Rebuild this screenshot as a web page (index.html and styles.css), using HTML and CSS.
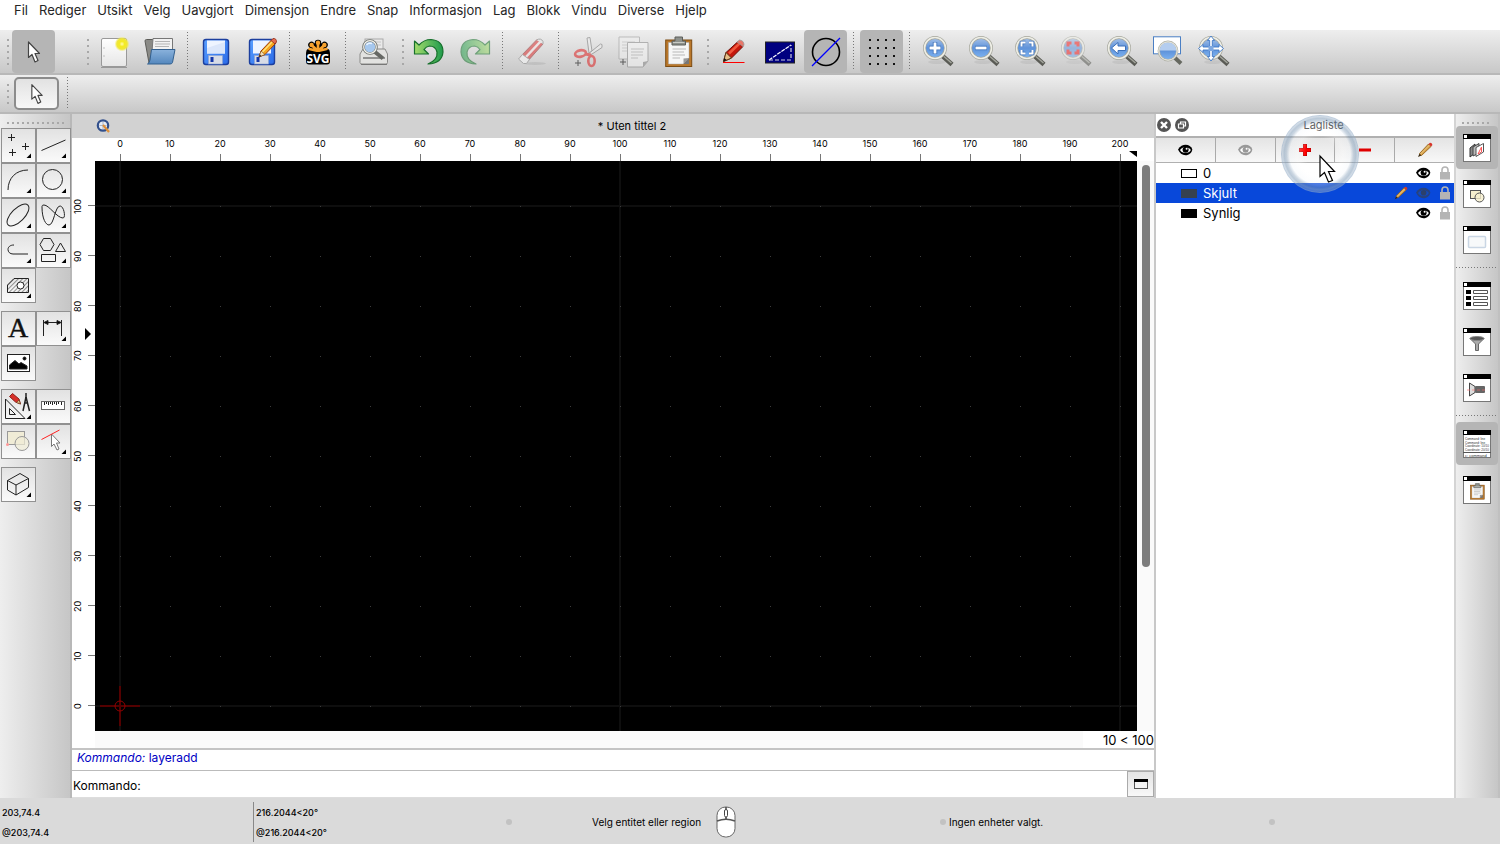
FILE: index.html
```html
<!DOCTYPE html>
<html lang="no">
<head>
    <meta charset="UTF-8">
    <meta name="viewport" content="width=device-width, initial-scale=1.0">
    <title>Uten tittel 2</title>
    <link rel="stylesheet" href="styles.css">
</head>
<body>
    <!-- Shared icon parts -->
    <svg class="defs" width="0" height="0" aria-hidden="true">
        <defs>
            <linearGradient id="blueGlass" x1="0" y1="0" x2="0" y2="1">
                <stop offset="0" stop-color="#a9c3e8"/>
                <stop offset="0.5" stop-color="#5f93da"/>
                <stop offset="1" stop-color="#7db4f2"/>
            </linearGradient>
            <linearGradient id="floppy" x1="0" y1="0" x2="1" y2="1">
                <stop offset="0" stop-color="#5aa0ff"/>
                <stop offset="1" stop-color="#2a6ae8"/>
            </linearGradient>
            <linearGradient id="paper" x1="0" y1="0" x2="0" y2="1">
                <stop offset="0" stop-color="#ffffff"/>
                <stop offset="1" stop-color="#e6e6e6"/>
            </linearGradient>
            <linearGradient id="folder" x1="0" y1="0" x2="0" y2="1">
                <stop offset="0" stop-color="#8ab2dc"/>
                <stop offset="1" stop-color="#5487bd"/>
            </linearGradient>
            <linearGradient id="greenArrow" x1="0" y1="0" x2="1" y2="0">
                <stop offset="0" stop-color="#a4dc6c"/>
                <stop offset="1" stop-color="#1f9a4c"/>
            </linearGradient>
            <radialGradient id="spark">
                <stop offset="0" stop-color="#fffbb0"/>
                <stop offset="0.35" stop-color="#f4ea20"/>
                <stop offset="0.7" stop-color="#efe63a"/>
                <stop offset="1" stop-color="#f4ee60" stop-opacity="0"/>
            </radialGradient>
            <pattern id="hatch" width="3" height="3" patternUnits="userSpaceOnUse" patternTransform="rotate(45)">
                <path d="M0 0V3" stroke="#333" stroke-width="1"/>
            </pattern>
            <pattern id="gridDots" width="50" height="50" patternUnits="userSpaceOnUse">
                <rect x="25" y="45" width="1" height="1" fill="#3c3c3c"/>
            </pattern>
            <pattern id="gridLines" width="500" height="500" patternUnits="userSpaceOnUse">
                <rect x="24" y="0" width="2" height="500" fill="#0e0e0e"/>
                <rect x="0" y="44" width="500" height="2" fill="#0e0e0e"/>
            </pattern>
        </defs>
        <symbol id="arrow" viewBox="0 0 32 32">
            <path d="M10.500 6V21.500L14 18.500L17 26L20 24.500L17 17.500H21.500Z" fill="#fff" stroke="#444" stroke-width="1.200" stroke-linejoin="round"/>
        </symbol>
        <symbol id="lens" viewBox="0 0 32 32">
            <ellipse cx="15" cy="26" rx="9" ry="2" fill="#000" opacity="0.060"/>
            <path d="M20.500 20L30 28.500" stroke="#5a5b55" stroke-width="4.500"/>
            <path d="M22 20.500L29.500 27" stroke="#a3a59c" stroke-width="1.500"/>
            <circle cx="13" cy="12" r="10.500" fill="url(#blueGlass)" stroke="#a5a69c" stroke-width="3"/>
            <circle cx="13" cy="12" r="10.500" fill="none" stroke="#eeeee6" stroke-width="1.600"/>
        </symbol>
        <symbol id="eye" viewBox="0 0 16 12">
            <path d="M1 5.500C3 2 6 0.800 8.500 0.800C12 0.800 14 2.500 15.300 5.200C15 8.800 12 11.200 8.500 11.200C5 11.200 2.500 9 1 5.500Z" fill="currentColor"/>
            <path d="M3 6C5 3.700 6.500 3.300 8.500 3.300C11 3.300 12.500 4.300 13.800 6C12.500 8.300 11 9 8.500 9C6 9 4.500 8.200 3 6Z" fill="#fff"/>
            <circle cx="8.600" cy="5.800" r="3" fill="currentColor"/>
            <circle cx="9.600" cy="4.800" r="1" fill="#fff"/>
        </symbol>
        <symbol id="hiddenEye" viewBox="0 0 16 12">
            <path d="M1 5.500C3 2 6 0.800 8.500 0.800C12 0.800 14 2.500 15.300 5.200C15 8.800 12 11.200 8.500 11.200C5 11.200 2.500 9 1 5.500Z" fill="#28427c"/>
            <path d="M3 6C5 3.700 6.500 3.300 8.500 3.300C11 3.300 12.500 4.300 13.800 6C12.500 8.300 11 9 8.500 9C6 9 4.500 8.200 3 6Z" fill="#124bc0"/>
            <circle cx="8.600" cy="5.800" r="2.800" fill="#2b406c"/>
        </symbol>
        <symbol id="lock" viewBox="0 0 12 16">
            <path d="M3 8V5C3 1 9 1 9 5V8" fill="none" stroke="#b4b4b4" stroke-width="1.600"/>
            <rect x="1" y="7" width="10" height="7.500" fill="#b4b4b4"/>
        </symbol>
        <symbol id="pencil" viewBox="0 0 16 16">
            <path d="M1 15L2.500 11.500L4.500 13.500Z" fill="#3a2a10"/>
            <path d="M2.500 11.500L11.500 2L14 4.500L4.500 13.500Z" fill="#d9a24a" stroke="#8c5a14" stroke-width="0.800"/>
            <path d="M3.500 12L12.500 3" stroke="#f0d494" stroke-width="0.800"/>
            <path d="M11.500 2L13 0.800Q15.500 1 15.300 3.300L14 4.500Z" fill="#d8342a"/>
        </symbol>
        <symbol id="clipboard" viewBox="0 0 32 32">
            <rect x="2.700" y="4" width="26" height="26.500" fill="#b9772a" stroke="#7d4c12"/>
            <path d="M5.500 6.500H26V22L20.500 28H5.500Z" fill="#f6f6f6" stroke="#aaa" stroke-width="0.500"/>
            <path d="M26 22L20.500 28V22.500Z" fill="#999"/>
            <path d="M20.500 28H26V22Z" fill="#777"/>
            <path d="M9.500 13H23M9.500 16H21M9.500 19H22M9.500 22H17" stroke="#b8b8b8" stroke-width="1.200"/>
            <path d="M9 9V5H12V1H19.500V5H22.500V9Z" fill="#8e918c" stroke="#5c5e5a"/>
            <path d="M10 6.500H21.500" stroke="#c8cac5"/>
        </symbol>
        <symbol id="window" viewBox="0 0 28 28">
            <rect x="0.500" y="0.500" width="27" height="27" fill="#fff" stroke="#777"/>
            <rect x="0" y="0" width="28" height="5" fill="#000"/>
            <rect x="1" y="1" width="3" height="3" fill="#fff"/>
        </symbol>
        <symbol id="more" viewBox="0 0 33 33">
            <path d="M29 24.500V29H24.500Z" fill="#000"/>
        </symbol>
    </svg>

    <nav class="menubar" aria-label="Hovedmeny">
        <button type="button">Fil</button>
        <button type="button">Rediger</button>
        <button type="button">Utsikt</button>
        <button type="button">Velg</button>
        <button type="button">Uavgjort</button>
        <button type="button">Dimensjon</button>
        <button type="button">Endre</button>
        <button type="button">Snap</button>
        <button type="button">Informasjon</button>
        <button type="button">Lag</button>
        <button type="button">Blokk</button>
        <button type="button">Vindu</button>
        <button type="button">Diverse</button>
        <button type="button">Hjelp</button>
    </nav>

    <!-- Main toolbar -->
    <div class="toolbar">
        <span class="grip"></span>
        <button type="button" class="tool active" aria-label="Velg"><svg><use href="#arrow"/></svg></button>

        <span class="grip grip-file"></span>
        <button type="button" class="tool" aria-label="Ny">
            <svg viewBox="0 0 32 32">
                <rect x="3.500" y="2.500" width="25" height="28" rx="1.500" fill="url(#paper)" stroke="#999"/>
                <path d="M3 31.500H29" stroke="#777" stroke-width="1" opacity="0.600"/>
                <circle cx="6" cy="12" r="0.800" fill="#bbb"/><circle cx="6" cy="20" r="0.800" fill="#bbb"/>
                <circle cx="24" cy="8" r="7.500" fill="url(#spark)"/>
            </svg>
        </button>
        <button type="button" class="tool" aria-label="Åpne">
            <svg viewBox="0 0 32 32">
                <path d="M1 5Q1 3.500 2.500 3.500H9L11 6V27H5Z" fill="#8a8a86" stroke="#5c5c58"/>
                <path d="M9 2.500H28.500V16H8Z" fill="#f2f2f2" stroke="#777"/>
                <path d="M11 5.500H26M11 8H26M11 10.500H25" stroke="#b5b5b5"/>
                <path d="M4 27L8 13H28V17Z" fill="#777974"/>
                <path d="M7.500 13.500H31L28.500 26.500Q28 28 26 28H3.500Q5.500 27 6 24Z" fill="url(#folder)" stroke="#33608f"/>
            </svg>
        </button>
        <span class="separator"></span>
        <button type="button" class="tool" aria-label="Lagre">
            <svg viewBox="0 0 32 32">
                <rect x="3.500" y="3.500" width="25" height="25" rx="2.500" fill="url(#floppy)" stroke="#1c3f9e" stroke-width="1.400"/>
                <rect x="7" y="4.500" width="18" height="13" fill="#eef4ff"/>
                <path d="M7 17.500V12L25 6V17.500Z" fill="#dbe6fa"/>
                <rect x="8.500" y="19.500" width="14" height="8.500" fill="#d8dce6" stroke="#8fa4cf" stroke-width="0.600"/>
                <rect x="10.500" y="21" width="3" height="5" fill="#1436a8"/>
            </svg>
        </button>
        <button type="button" class="tool" aria-label="Lagre som">
            <svg viewBox="0 0 32 32">
                <rect x="3.500" y="3.500" width="25" height="25" rx="2.500" fill="url(#floppy)" stroke="#1c3f9e" stroke-width="1.400"/>
                <rect x="7" y="4.500" width="18" height="13" fill="#eef4ff"/>
                <rect x="8.500" y="19.500" width="14" height="8.500" fill="#d8dce6" stroke="#8fa4cf" stroke-width="0.600"/>
                <rect x="10.500" y="21" width="3" height="5" fill="#1436a8"/>
                <path d="M13 21L15 15L26 3.500L30 7L19 18.500Z" fill="#f7a61c" stroke="#9c3a08"/>
                <path d="M16 16.500L27 5" stroke="#ffe27a" stroke-width="1.500"/>
                <path d="M25 4.500L27 2.500Q30.500 2 30.500 6L29 8Z" fill="#e56b4c" stroke="#8e2a14" stroke-width="0.800"/>
                <path d="M13 21L15 15L19 18.500Z" fill="#f5deb2" stroke="#7a4a14" stroke-width="0.600"/>
                <path d="M13 21L13.800 18.600L15.400 20Z" fill="#222"/>
            </svg>
        </button>
        <span class="separator"></span>
        <button type="button" class="tool" aria-label="Eksporter SVG">
            <svg viewBox="0 0 32 32">
                <g stroke="#000" stroke-width="6.500" stroke-linecap="round">
                    <path d="M16 16V7M16 16L9.500 9M16 16L22.500 9M16 16H7.500M16 16H24.500"/>
                </g>
                <rect x="4" y="15" width="24" height="13.500" rx="3" fill="#000"/>
                <g stroke="#f7a22e" stroke-width="2.600" stroke-linecap="round">
                    <path d="M16 15V7.500M16 15L10 9.500M16 15L22 9.500M16 15L7.500 13M16 15L24.500 13"/>
                </g>
                <g fill="#f7a22e"><circle cx="16" cy="6.800" r="2.200"/><circle cx="9.600" cy="9" r="2.200"/><circle cx="22.400" cy="9" r="2.200"/></g>
                <rect x="5" y="16" width="22" height="11.500" fill="#000"/>
                <text x="16" y="27" class="svg-word">SVG</text>
            </svg>
        </button>
        <span class="separator"></span>
        <button type="button" class="tool" aria-label="Forhåndsvisning">
            <svg viewBox="0 0 32 32">
                <rect x="7" y="3" width="18" height="14" fill="#e9e9e9" stroke="#aaa"/>
                <path d="M14 6H23M18 9H23" stroke="#c4c4c4"/>
                <path d="M2 18L5 13H27L29.500 18V26.500Q29.500 28 28 28H4Q2 28 2 26.500Z" fill="#e2e2e0" stroke="#8a8a88"/>
                <path d="M5 22H27" stroke="#777" stroke-width="1.500"/>
                <path d="M3 28.500H29" stroke="#555" opacity="0.600"/>
                <path d="M17 16L25 22.500" stroke="#666864" stroke-width="4"/>
                <circle cx="12" cy="11" r="6.500" fill="#a6c8ee" stroke="#6f736d" stroke-width="2.600"/>
                <circle cx="12" cy="11" r="6.300" fill="none" stroke="#f4f4f0" stroke-width="1.200"/>
                <path d="M8.500 9Q10 6.500 14 7.500" fill="none" stroke="#e9f3ff" stroke-width="1.500"/>
            </svg>
        </button>
        <span class="grip"></span>
        <button type="button" class="tool" aria-label="Angre">
            <svg viewBox="0 0 32 32">
                <path id="undoShape" d="M1.500 5L6 9Q11 3.500 18 3.500Q30 4.500 30 16Q29 27.500 15 28Q25 24 24 16Q22.500 10 16.500 10Q13 10.500 11 13.500L15.500 18H1.500Z" fill="url(#greenArrow)" stroke="#17702c" stroke-width="1.200" stroke-linejoin="round"/>
            </svg>
        </button>
        <button type="button" class="tool faded" aria-label="Gjør om">
            <svg viewBox="0 0 32 32"><use href="#undoShape" transform="matrix(-1 0 0 1 32 0)"/></svg>
        </button>
        <span class="separator"></span>
        <button type="button" class="tool faded" aria-label="Slett">
            <svg viewBox="0 0 32 32">
                <ellipse cx="20" cy="27.500" rx="11" ry="1.500" fill="#888" opacity="0.400"/>
                <path d="M5 21L22 3.500L28 8L11.500 26.500Z" fill="#d93030" stroke="#8e3030"/>
                <path d="M9.500 22.500L25.500 5.500" stroke="#f6e8e8" stroke-width="2.500"/>
                <path d="M3.500 23L7.500 18.500L14.500 23.500L11.500 27.500H8.500Z" fill="#fafafa" stroke="#888"/>
                <path d="M21.500 4Q26 1.500 28 5.500V8" fill="#e8e8e8" stroke="#777"/>
            </svg>
        </button>
        <span class="separator"></span>
        <button type="button" class="tool faded" aria-label="Klipp ut">
            <svg viewBox="0 0 32 32">
                <path d="M18 17L16 2L19 1.500L21 15Z" fill="#eee" stroke="#777"/>
                <path d="M16 19L29.500 8L31 8.500V11.500L18 20Z" fill="#eee" stroke="#777"/>
                <ellipse cx="9.500" cy="17.500" rx="5.500" ry="3.200" fill="none" stroke="#d22" stroke-width="2.600" transform="rotate(-12 9.500 17.500)"/>
                <ellipse cx="20.500" cy="25" rx="3.200" ry="5" fill="none" stroke="#d22" stroke-width="2.600"/>
                <path d="M14 18L20 19" stroke="#d22" stroke-width="3"/>
                <path d="M7 24V30M4 27H10" stroke="#000"/>
            </svg>
        </button>
        <button type="button" class="tool faded" aria-label="Kopier">
            <svg viewBox="0 0 32 32">
                <path d="M2 1H22.500V23H2Z" fill="#f0f0f0" stroke="#999"/>
                <path d="M5 6H18M5 9H10M5 12H10M5 15H10" stroke="#bbb"/>
                <path d="M10.500 6.500H31V25L26 31H10.500Z" fill="#f6f6f6" stroke="#888"/>
                <path d="M14 13H27M14 16H26M14 19H26M14 22H21" stroke="#aaa"/>
                <path d="M31 25L26 31V26Z" fill="#888"/>
                <path d="M6 23V29M3 26H9" stroke="#000"/>
            </svg>
        </button>
        <button type="button" class="tool" aria-label="Lim inn"><svg><use href="#clipboard"/></svg></button>
        <span class="grip"></span>
        <button type="button" class="tool" aria-label="Penn">
            <svg viewBox="0 0 32 32">
                <path d="M5.500 25.500L8 16.500L19.500 6L25 10.500L13.500 22Z" fill="#c4170c" stroke="#6c1008"/>
                <path d="M11 17.500L21.500 7.500" stroke="#f0563c" stroke-width="2.500"/>
                <path d="M5.500 25.500L8 16.500L13.500 22Z" fill="#e6bf88" stroke="#5a3a18"/>
                <path d="M5.500 25.500L6.300 22L8.600 24Z" fill="#111"/>
                <path d="M19 6L21.500 4Q26 4.500 26 9L25 10.500Z" fill="#e8776a" stroke="#999" stroke-width="0.800"/>
                <path d="M5 26.500H26.500" stroke="#f00"/>
            </svg>
        </button>
        <button type="button" class="tool" aria-label="Avstand">
            <svg viewBox="0 0 32 32">
                <rect x="1.500" y="6" width="29" height="21" fill="#000080" stroke="#222"/>
                <path d="M5 24L27 9" stroke="#fff" stroke-width="1.200" stroke-dasharray="4 1"/>
                <path d="M5 24H27V9" fill="none" stroke="#ccd" stroke-width="1.200" stroke-dasharray="4 2"/>
            </svg>
        </button>
        <button type="button" class="tool active" aria-label="Utkast">
            <svg viewBox="0 0 32 32">
                <circle cx="16" cy="16" r="13.500" fill="none" stroke="#000" stroke-width="1.600"/>
                <path d="M2 30L30 2" stroke="#00f" stroke-width="1.200"/>
            </svg>
        </button>
        <span class="separator"></span>
        <button type="button" class="tool active" aria-label="Rutenett">
            <svg viewBox="0 0 32 32">
                <path d="M3 4H30M3 12H30M3 20H30M3 28H30" stroke="#111" stroke-width="2" stroke-dasharray="2 6"/>
            </svg>
        </button>
        <span class="separator"></span>
        <button type="button" class="tool" aria-label="Zoom inn">
            <svg viewBox="0 0 32 32"><use href="#lens"/><path d="M13 6V18M7 12H19" stroke="#3a6fb8" stroke-width="4.400"/><path d="M13 6.500V17.500M7.500 12H18.500" stroke="#fff" stroke-width="2.800"/></svg>
        </button>
        <button type="button" class="tool" aria-label="Zoom ut">
            <svg viewBox="0 0 32 32"><use href="#lens"/><path d="M7 12H19" stroke="#3a6fb8" stroke-width="4.400"/><path d="M7.500 12H18.500" stroke="#fff" stroke-width="2.800"/></svg>
        </button>
        <button type="button" class="tool" aria-label="Zoom alt">
            <svg viewBox="0 0 32 32"><use href="#lens"/><path d="M7.500 10.500V6.500H11.500M15 6.500H18.500V10.500M18.500 14V17.500H15M11.500 17.500H7.500V14" fill="none" stroke="#3a6fb8" stroke-width="3.600"/><path d="M7.500 10.500V6.500H11.500M15 6.500H18.500V10.500M18.500 14V17.500H15M11.500 17.500H7.500V14" fill="none" stroke="#fff" stroke-width="2"/></svg>
        </button>
        <button type="button" class="tool faded" aria-label="Zoom utvalg">
            <svg viewBox="0 0 32 32"><use href="#lens"/><path d="M8 10.500V7H11.500M14.500 7H18V10.500M18 13.500V17H14.500M11.500 17H8V13.500" fill="none" stroke="#f22020" stroke-width="3"/></svg>
        </button>
        <button type="button" class="tool" aria-label="Forrige visning">
            <svg viewBox="0 0 32 32"><use href="#lens"/><path d="M5.500 12L12 6.500V10H19.500V14.500H12V18Z" fill="#fff" stroke="#3a6fb8"/></svg>
        </button>
        <button type="button" class="tool" aria-label="Zoom vindu">
            <svg viewBox="0 0 32 32">
                <rect x="1.500" y="0.800" width="27" height="17" fill="#fff" stroke="#4a7fc4"/>
                <path d="M22 21L29 27.500" stroke="#666860" stroke-width="4"/>
                <circle cx="16" cy="15" r="9.200" fill="url(#blueGlass)" stroke="#b0b1a6" stroke-width="2.400"/>
                <path d="M7.500 14.500Q8.500 6.500 16 6.500Q23.500 6.500 24.500 14.500Z" fill="#b4cdef"/>
                <circle cx="16" cy="15" r="9.200" fill="none" stroke="#eeeee6" stroke-width="1"/>
            </svg>
        </button>
        <button type="button" class="tool" aria-label="Panorer">
            <svg viewBox="0 0 32 32"><use href="#lens"/><path d="M13 0L16.500 4.500H14.300V11H21V8.500L25.500 12.500L21 16.500V14H14.300V20.500H16.500L13 25L9.500 20.500H11.700V14H5V16.500L0.500 12.500L5 8.500V11H11.700V4.500H9.500Z" fill="#fff" stroke="#3f78c6" stroke-width="0.900"/><rect x="10.500" y="10" width="5" height="5" fill="#7fa8e0"/></svg>
        </button>
    </div>

    <div class="optionbar">
        <span class="grip"></span>
        <button type="button" class="option-tool" aria-label="Nullstill verktøy"><svg><use href="#arrow"/></svg></button>
        <span class="separator"></span>
    </div>

    <div class="workspace">
        <!-- CAD tools -->
        <aside class="tool-dock">
            <span class="grip-row"></span>
            <div class="tool-group">
                <button type="button" class="cad" aria-label="Punkt"><svg viewBox="0 0 33 33"><path d="M9.500 5V12M6 8.500H13M23.500 14V21M20 17.500H27M10.500 20V27M7 23.500H14"/><use href="#more"/></svg></button>
                <button type="button" class="cad" aria-label="Linje"><svg viewBox="0 0 33 33"><path d="M4.500 21.500L28.500 11"/><use href="#more"/></svg></button>
                <button type="button" class="cad" aria-label="Bue"><svg viewBox="0 0 33 33"><path d="M6 26C6 14 14 6 26 6"/><use href="#more"/></svg></button>
                <button type="button" class="cad" aria-label="Sirkel"><svg viewBox="0 0 33 33"><circle cx="15.500" cy="15.500" r="10"/><use href="#more"/></svg></button>
                <button type="button" class="cad" aria-label="Ellipse"><svg viewBox="0 0 33 33"><ellipse cx="16" cy="16" rx="14" ry="6.500" transform="rotate(-45 16 16)"/><use href="#more"/></svg></button>
                <button type="button" class="cad" aria-label="Spline"><svg viewBox="0 0 33 33"><path d="M5 8C5 20 9 26 12 26C17 26 18 7 23 7C27 7 29 19 26 19C20 19 12 6 7 6C5 6 5 7 5 8Z"/><use href="#more"/></svg></button>
                <button type="button" class="cad" aria-label="Polylinje"><svg viewBox="0 0 33 33"><path d="M12 11C8 11 6 13 6 15.500C6 18 8 20 11 20H26"/><use href="#more"/></svg></button>
                <button type="button" class="cad" aria-label="Form"><svg viewBox="0 0 33 33"><path d="M3 10.500L6.500 4.500H13.500L17 10.500L13.500 16.500H6.500ZM18.500 17.500L23.500 9L28.500 17.500ZM4.500 20.500H18.500V27.500H4.500Z"/><use href="#more"/></svg></button>
                <button type="button" class="cad" aria-label="Skravering"><svg viewBox="0 0 33 33"><path d="M5.500 23.500V16L12 9.500H26.500V23.500Z" fill="url(#hatch)"/><circle cx="18.500" cy="16.500" r="3.500" fill="#fff"/><use href="#more"/></svg></button>
            </div>
            <div class="tool-group">
                <button type="button" class="cad" aria-label="Tekst"><svg viewBox="0 0 33 33"><text x="16" y="25" class="letter">A</text></svg></button>
                <button type="button" class="cad" aria-label="Dimensjon"><svg viewBox="0 0 33 33"><path d="M6.500 8V24M24.500 8V24M7 10.500H24"/><path d="M7 10.500L11 8.500V12.500ZM24 10.500L20 8.500V12.500Z" fill="#000"/><use href="#more"/></svg></button>
                <button type="button" class="cad" aria-label="Bilde"><svg viewBox="0 0 33 33"><rect x="5.500" y="7.500" width="22" height="17" fill="#fff"/><path d="M7.500 22V18L13 13.500L17 17L19 15.500L25 19V22Z" fill="#000"/><circle cx="22.500" cy="11.500" r="1.500" fill="#000"/></svg></button>
            </div>
            <div class="tool-group">
                <button type="button" class="cad" aria-label="Endre"><svg viewBox="0 0 33 33"><path d="M3.500 9V28.500H23ZM7.500 18.500V24.500H13.500Z"/><path d="M24 7L21 21M24 7L27.500 21M24 3V7M22.500 13H26" stroke-width="1.500"/><path d="M7.500 6.500L10.500 3.500L17 9L18.500 14L13.500 12Z" fill="#d8302a" stroke="#8c2018"/><path d="M18.500 14L17 10L14.500 12.500Z" fill="#e6bf88" stroke="#5a3a18" stroke-width="0.600"/><use href="#more"/></svg></button>
                <button type="button" class="cad" aria-label="Mål"><svg viewBox="0 0 33 33"><rect x="4.500" y="11.500" width="23" height="8" fill="#fff" stroke="#666"/><path d="M7.500 12V15M9.500 12V14M11.500 12V15M13.500 12V14M15.500 12V15M17.500 12V14M19.500 12V15M21.500 12V14M24.500 12V15"/></svg></button>
                <button type="button" class="cad" aria-label="Lag blokk"><svg viewBox="0 0 33 33"><rect x="5.500" y="6.500" width="17" height="13" fill="#f0ecd6" stroke="#999"/><circle cx="20" cy="18.500" r="7" fill="#f0ecd6" fill-opacity="0.700" stroke="#999"/><circle cx="5.500" cy="19.500" r="1.500" fill="#f99" stroke="none"/></svg></button>
                <button type="button" class="cad" aria-label="Velg objekt"><svg viewBox="0 0 33 33"><path d="M14.500 9V21.500L17 19L20 25L22 24L19.500 18H23Z" fill="#fff" stroke="#777"/><path d="M4.500 14.500L22.500 5" stroke="#f22"/><use href="#more"/></svg></button>
            </div>
            <div class="tool-group">
                <button type="button" class="cad" aria-label="3D"><svg viewBox="0 0 33 33"><path d="M18 5.500L26.500 10.500L14 17L5.500 12.500ZM5.500 12.500V22L14 27V17M14 27L26.500 19.500V10.500"/><use href="#more"/></svg></button>
            </div>
        </aside>

        <main class="drawing">
            <div class="tab">
                <svg class="tab-icon" viewBox="0 0 14 14">
                    <circle cx="7" cy="6.500" r="5.200" fill="#e8ecf4" stroke="#32508c" stroke-width="2.200"/>
                    <path d="M7 3V10M3.500 6.500H10.500" stroke="#a9b4c8"/>
                    <path d="M7 6L13 13" stroke="#e0913a" stroke-width="2.200"/>
                </svg>
                <span class="tab-title">* Uten tittel 2</span>
            </div>
            <div class="ruler-top">
                <span>0</span><span>10</span><span>20</span><span>30</span><span>40</span><span>50</span><span>60</span><span>70</span><span>80</span><span>90</span><span>100</span><span>110</span><span>120</span><span>130</span><span>140</span><span>150</span><span>160</span><span>170</span><span>180</span><span>190</span><span>200</span>
                <i class="marker-top"></i>
            </div>
            <div class="view">
                <div class="ruler-left">
                    <span>100</span><span>90</span><span>80</span><span>70</span><span>60</span><span>50</span><span>40</span><span>30</span><span>20</span><span>10</span><span>0</span>
                    <i class="marker-left"></i>
                </div>
                <svg class="canvas">
                    <rect width="100%" height="100%" fill="#000"/>
                    <rect width="100%" height="100%" fill="url(#gridLines)"/>
                    <rect width="100%" height="100%" fill="url(#gridDots)"/>
                    <!-- Origin -->
                    <path d="M5 545H45M25 525V565" stroke="#540000" stroke-width="2"/>
                    <circle cx="25" cy="545" r="5" fill="none" stroke="#900000"/>
                </svg>
                <div class="scroll-v"><div class="thumb"></div></div>
            </div>
            <div class="scroll-h">
                <output class="grid-info">10 &lt; 100</output>
            </div>
            <div class="history"><em>Kommando:</em> layeradd</div>
            <div class="command">
                <label for="command">Kommando:</label>
                <input type="text" id="command">
                <button type="button" class="command-toggle" aria-label="Vis vindu">
                    <svg viewBox="0 0 14 10"><rect x="0.500" y="0.500" width="13" height="9" fill="#f4f4f4" stroke="#555"/><rect width="14" height="3" fill="#000"/></svg>
                </button>
            </div>
        </main>

        <!-- Layer list -->
        <section class="layers">
            <header class="layers-title">
                <button type="button" class="round" aria-label="Lukk"><svg viewBox="0 0 14 14"><circle cx="7" cy="7" r="7" fill="#555"/><path d="M4 4L10 10M10 4L4 10" stroke="#fff" stroke-width="2.400"/></svg></button>
                <button type="button" class="round" aria-label="Løsne"><svg viewBox="0 0 14 14"><circle cx="7" cy="7" r="7" fill="#555"/><path d="M5.500 6V4H10.500V8H9M3.500 6H8.500V10H3.500Z" fill="none" stroke="#fff" stroke-width="1.200"/></svg></button>
                <h2>Lagliste</h2>
            </header>
            <div class="layers-tools">
                <button type="button" aria-label="Vis alle"><svg class="eye"><use href="#eye"/></svg></button>
                <button type="button" aria-label="Skjul alle"><svg class="eye muted"><use href="#eye"/></svg></button>
                <button type="button" aria-label="Legg til lag"><svg class="sign" viewBox="0 0 12 12"><path d="M6 0V12M0 6H12" stroke="#a00" stroke-width="4"/><path d="M6 0.500V11.500M0.500 6H11.500" stroke="#f00" stroke-width="3"/></svg></button>
                <button type="button" aria-label="Fjern lag"><svg class="sign" viewBox="0 0 12 12"><path d="M0 6H12" stroke="#e00000" stroke-width="3"/></svg></button>
                <button type="button" aria-label="Rediger lag"><svg class="pencil"><use href="#pencil"/></svg></button>
            </div>
            <ul class="layer-list">
                <li>
                    <span class="swatch swatch-white"></span><span class="name">0</span>
                    <button type="button" aria-label="Synlighet"><svg class="eye"><use href="#eye"/></svg></button>
                    <button type="button" aria-label="Lås"><svg class="lock"><use href="#lock"/></svg></button>
                </li>
                <li class="selected">
                    <span class="swatch swatch-hidden"></span><span class="name">Skjult</span>
                    <svg class="pencil-small"><use href="#pencil"/></svg>
                    <button type="button" aria-label="Synlighet"><svg class="eye"><use href="#hiddenEye"/></svg></button>
                    <button type="button" aria-label="Lås"><svg class="lock"><use href="#lock"/></svg></button>
                </li>
                <li>
                    <span class="swatch"></span><span class="name">Synlig</span>
                    <button type="button" aria-label="Synlighet"><svg class="eye"><use href="#eye"/></svg></button>
                    <button type="button" aria-label="Lås"><svg class="lock"><use href="#lock"/></svg></button>
                </li>
            </ul>
            <!-- Mouse pointer with click halo -->
            <div class="halo"></div>
            <svg class="pointer" viewBox="0 0 18 30"><path d="M2 2V22.500L6.500 18.500L10.500 28L14.500 26.500L10.500 17.500H16.500Z" fill="#fff" stroke="#000" stroke-width="1.200"/></svg>
        </section>

        <aside class="panel-dock">
            <span class="grip-row"></span>
            <button type="button" class="tool active" aria-label="Lagliste"><svg viewBox="0 0 28 28"><use href="#window"/><path d="M7 14L12 10V19L7 23Z" fill="#888" stroke="#333"/><path d="M10 13L16 9.500V19L10 22Z" fill="#bbb" stroke="#444"/><path d="M13 13.500L20.500 9.500V18L13 22.500Z" fill="#fff" stroke="#555"/><path d="M15 20L18.500 13V18Z" fill="none" stroke="#f55"/></svg></button>
            <button type="button" class="tool" aria-label="Blokkliste"><svg viewBox="0 0 28 28"><use href="#window"/><rect x="7.500" y="10.500" width="10" height="8" fill="#f6efcd" stroke="#555"/><circle cx="16.500" cy="17.500" r="4.500" fill="#f6efcd" fill-opacity="0.800" stroke="#555"/></svg></button>
            <button type="button" class="tool" aria-label="Visninger"><svg viewBox="0 0 28 28"><use href="#window"/><rect x="5.500" y="10.500" width="17" height="11" rx="1" fill="#f7f9fa" stroke="#c9d6e4" stroke-width="1.500"/></svg></button>
            <span class="separator-row"></span>
            <button type="button" class="tool" aria-label="Egenskaper"><svg viewBox="0 0 28 28"><use href="#window"/><path d="M3 10H8M3 16H8M3 22H8" stroke="#000" stroke-width="4"/><path d="M10.500 8.500H24.500V11.500H10.500ZM10.500 14.500H24.500V17.500H10.500ZM10.500 20.500H24.500V23.500H10.500Z" fill="#fff" stroke="#555"/></svg></button>
            <button type="button" class="tool" aria-label="Filter"><svg viewBox="0 0 28 28"><use href="#window"/><path d="M7 10.500L12.500 16V22.500H15.500V16L21 10.500Z" fill="#aaa" stroke="#666"/><ellipse cx="14" cy="10.500" rx="7" ry="2" fill="#555" stroke="#888"/></svg></button>
            <button type="button" class="tool" aria-label="Lys"><svg viewBox="0 0 28 28"><use href="#window"/><path d="M6.500 9V22L12 18.500V12.500Z" fill="#ddd" stroke="#444"/><rect x="12" y="12" width="10" height="7" rx="1" fill="#666"/><path d="M4 16H24" stroke="#f66" stroke-dasharray="3 2" opacity="0.600"/></svg></button>
            <span class="separator-row"></span>
            <button type="button" class="tool active" aria-label="Kommandolinje"><svg viewBox="0 0 28 28"><use href="#window"/><text class="tiny"><tspan x="2" y="10">Command: line</tspan><tspan x="2" y="13.500">Command: line</tspan><tspan x="2" y="17">Coordinate: 10/10</tspan><tspan x="2" y="20.500">Coordinate: 20/10</tspan></text><path d="M0 22.500H28" stroke="#555"/><text x="2" y="27" class="tiny tiny-line">c:   command</text></svg></button>
            <button type="button" class="tool" aria-label="Utklippstavle"><svg viewBox="0 0 28 28"><use href="#window"/><use href="#clipboard" x="6" y="7" width="17" height="17"/></svg></button>
        </aside>
    </div>

    <footer class="statusbar">
        <div class="coords"><span>203,74.4</span><span>@203,74.4</span></div>
        <div class="coords divided"><span>216.2044&lt;20°</span><span>@216.2044&lt;20°</span></div>
        <div class="status-cell">
            <i class="dot"></i>
            <span class="hint">Velg entitet eller region</span>
            <svg class="mouse" viewBox="0 0 20 32"><rect x="1" y="1" width="18" height="30" rx="8.500" fill="#fff" stroke="#666"/><path d="M1 15Q10 11.500 19 15" fill="none" stroke="#555" stroke-width="1.500"/><path d="M10 1V3.500M10 11V13" stroke="#444" stroke-width="1.500"/><rect x="8.500" y="3.500" width="3" height="7.500" rx="1.500" fill="#fff" stroke="#444"/></svg>
        </div>
        <div class="status-cell"><i class="dot"></i><span>Ingen enheter valgt.</span></div>
        <div class="status-cell"><i class="dot"></i></div>
    </footer>
</body>
</html>
```

FILE: styles.css
```css
* {
    box-sizing: border-box;
}
body {
    margin: 0;
    height: 100vh;
    display: flex;
    flex-direction: column;
    overflow: hidden;
    background-color: #fff;
    color: #000;
    font-family: Inter, "Liberation Sans", sans-serif;
    font-size: 13px;
}
button {
    display: flex;
    align-items: center;
    justify-content: center;
    flex: none;
    margin: 0;
    padding: 0;
    border: none;
    background: none;
    color: inherit;
    font: inherit;
}
svg {
    display: block;
    flex: none;
}
.defs {
    position: absolute;
}

/* Menu */
.menubar {
    display: flex;
    flex: none;
    gap: 11px;
    height: 30px;
    padding: 1px 14px 0;
    align-items: flex-start;
    color: #262626;
}
.menubar button {
    height: 18px;
}

/* Toolbars */
.toolbar,
.optionbar {
    display: flex;
    flex: none;
    align-items: center;
    gap: 3px;
    padding-left: 3px;
    background: linear-gradient(#eeeeee, #c8c8c8);
    border-bottom: 2px solid #b8b8b8;
}
.toolbar {
    height: 45px;
}
.optionbar {
    height: 39px;
}
.tool {
    width: 43px;
    height: 43px;
    border-radius: 4px;
}
.tool svg {
    width: 32px;
    height: 32px;
}
.active {
    background-color: #b5b5b5;
}
.faded svg {
    opacity: 0.55;
}
.grip {
    flex: none;
    width: 6px;
    height: 26px;
    background: linear-gradient(#a8a8a8 2px, transparent 2px) right top / 2px 6px repeat-y;
}
.grip-file {
    margin-left: 25px;
}
.optionbar .grip {
    height: 20px;
}
.separator {
    flex: none;
    align-self: stretch;
    width: 7px;
    margin: 2px 0;
    background: linear-gradient(#777 1px, transparent 1px) center top / 1px 3px repeat-y;
}
.option-tool {
    width: 45px;
    height: 33px;
    margin: 0 2px;
    border: 2px solid #8c8c8c;
    border-radius: 5px;
    background: linear-gradient(#e2e2e2, #f8f8f8);
}
.option-tool svg {
    width: 30px;
    height: 30px;
}
.svg-word {
    fill: #fff;
    font: bold 12px "Open Sans", sans-serif;
    text-anchor: middle;
}

/* Workspace */
.workspace {
    display: flex;
    flex: 1;
    min-height: 0;
}
.tool-dock {
    display: flex;
    flex: none;
    flex-direction: column;
    gap: 8px;
    width: 72px;
    padding-left: 1px;
    background: linear-gradient(to right, #eeeeee, #c6c6c6);
    border-right: 2px solid #b8b8b8;
}
.grip-row {
    flex: none;
    height: 2px;
    margin: 8px 6px 4px;
    background: linear-gradient(to right, #a8a8a8 2px, transparent 2px) left top / 5px 2px repeat-x;
}
.tool-dock .grip-row {
    margin-bottom: -4px;
}
.tool-group {
    display: grid;
    grid-template-columns: 35px 35px;
}
.cad {
    width: 35px;
    height: 35px;
    border: 1px solid #919191;
    background: linear-gradient(#e2e2e2, #fafafa);
}
.cad svg {
    width: 33px;
    height: 33px;
    fill: none;
    stroke: #222;
}
.cad use {
    stroke: none;
}
.letter {
    fill: #111;
    stroke: #111;
    stroke-width: 0.4px;
    font: 28px "Liberation Serif", serif;
    text-anchor: middle;
}

/* Drawing */
.drawing {
    display: flex;
    flex: 1;
    flex-direction: column;
    min-width: 0;
}
.tab {
    display: flex;
    flex: none;
    align-items: center;
    height: 24px;
    background-color: #d2d2d2;
    font-size: 11px;
}
.tab-icon {
    width: 14px;
    height: 14px;
    margin-left: 24px;
}
.tab-title {
    flex: 1;
    text-align: center;
}
.ruler-top {
    position: relative;
    display: flex;
    flex: none;
    height: 23px;
    padding-left: 23px;
    overflow: hidden;
    font-size: 9px;
    line-height: 12px;
}
.ruler-top span {
    display: flex;
    flex: none;
    flex-direction: column;
    align-items: center;
    justify-content: space-between;
    width: 50px;
}
.ruler-top span::after {
    content: "";
    width: 1px;
    height: 7px;
    background-color: #777;
}
.marker-top {
    position: absolute;
    right: 17px;
    bottom: 4px;
    border-top: 6px solid #000;
    border-left: 8px solid transparent;
}
.view {
    display: flex;
    flex: 1;
    min-height: 0;
}
.ruler-left {
    position: relative;
    flex: none;
    width: 23px;
    padding-top: 20px;
    overflow: hidden;
    font-size: 9px;
    line-height: 12px;
}
.ruler-left span {
    display: flex;
    flex-direction: column;
    align-items: center;
    justify-content: space-between;
    width: 23px;
    height: 50px;
    writing-mode: vertical-rl;
    transform: rotate(180deg);
}
.ruler-left span::after {
    content: "";
    width: 7px;
    height: 1px;
    background-color: #777;
}
/* the label is turned, so its block start lies on the left */
.marker-left {
    position: absolute;
    top: 167px;
    right: 4px;
    border: 6px solid transparent;
    border-left-color: #000;
    border-right-width: 0;
}
.canvas {
    flex: 1;
    min-width: 0;
    height: 100%;
}
.scroll-v {
    flex: none;
    width: 17px;
    padding: 4px 4px 0 5px;
    background-color: #fafafa;
}
.thumb {
    height: 71%;
    border-radius: 4px;
    background-color: #7d7d7d;
}
.scroll-h {
    display: flex;
    flex: none;
    justify-content: flex-end;
    height: 17px;
    margin-left: 23px;
    background-color: #fafafa;
}
.grid-info {
    width: 71px;
    background-color: #fff;
    line-height: 18px;
    text-align: right;
}
.history {
    flex: none;
    height: 23px;
    padding-left: 5px;
    border-top: 2px solid #c4c4c4;
    border-bottom: 1px solid #bbb;
    color: #0000c4;
    font-size: 12px;
    line-height: 16px;
}
.command {
    display: flex;
    flex: none;
    align-items: center;
    height: 27px;
    padding-left: 1px;
    border-bottom: 1px solid #ddd;
    font-size: 12px;
}
.command label {
    padding-top: 2px;
}
.command input {
    flex: 1;
    min-width: 0;
    height: 24px;
    border: none;
    outline: none;
    font: inherit;
}
.command-toggle {
    width: 27px;
    height: 26px;
    border: 1px solid #aaa;
    background: linear-gradient(#e4e4e4, #f8f8f8);
}
.command-toggle svg {
    width: 14px;
    height: 10px;
}

/* Layer list */
.layers {
    position: relative;
    flex: none;
    width: 302px;
    border-left: 2px solid #c8c8c8;
    border-right: 2px solid #d4d4d4;
}
.layers-title {
    display: flex;
    align-items: center;
    gap: 4px;
    height: 22px;
    padding-left: 1px;
}
.layers-title h2 {
    flex: 1;
    margin: 0;
    color: #222;
    font-size: 11px;
    font-weight: normal;
    text-align: center;
}
.round svg {
    width: 14px;
    height: 14px;
}
.layers-tools {
    display: flex;
    height: 27px;
    border-top: 2px solid #b0b0b0;
    border-bottom: 1px solid #b0b0b0;
}
.layers-tools button {
    flex: 1;
    border-right: 1px solid #aaa;
    background: linear-gradient(#e4e4e4, #f8f8f8);
}
.layers-tools button:last-child {
    border-right: none;
}
.eye {
    width: 16px;
    height: 12px;
    color: #000;
}
.muted {
    color: #999;
}
.sign {
    width: 12px;
    height: 12px;
}
.pencil {
    width: 16px;
    height: 16px;
}
.pencil-small {
    width: 14px;
    height: 14px;
    margin-right: 7px;
}
.lock {
    width: 12px;
    height: 16px;
}
.layer-list {
    margin: 0;
    padding: 0;
    list-style: none;
}
.layer-list li {
    display: flex;
    align-items: center;
    height: 20px;
    padding-left: 25px;
    padding-right: 3px;
}
.layer-list button + button {
    margin-left: 8px;
}
.name {
    flex: 1;
    padding-left: 6px;
}
.swatch {
    width: 16px;
    height: 9px;
    background-color: #000;
}
.swatch-white {
    border: 1px solid #000;
    background-color: #fff;
}
.swatch-hidden {
    background-color: #36414f;
}
.selected {
    background-color: #0848da;
    color: #fff;
}
.halo {
    position: absolute;
    top: 1px;
    right: 95px;
    width: 78px;
    height: 78px;
    border: 1px solid rgba(140, 165, 195, 0.3);
    border-radius: 50%;
    background: radial-gradient(circle closest-side, rgba(255, 255, 255, 0) 38%, rgba(255, 255, 255, 0.3) 60%, rgba(240, 245, 250, 0.3) 80%, rgba(140, 165, 190, 0.45) 88%, rgba(140, 165, 190, 0.6) 94%, rgba(160, 182, 205, 0.4) 100%);
    pointer-events: none;
}
.pointer {
    position: absolute;
    top: 40px;
    right: 118px;
    width: 18px;
    height: 30px;
    pointer-events: none;
}

/* Panel buttons */
.panel-dock {
    display: flex;
    flex: none;
    flex-direction: column;
    gap: 3px;
    width: 44px;
    background: linear-gradient(to right, #eeeeee, #c6c6c6);
    border-right: 2px solid #c0c0c0;
}
.panel-dock .grip-row {
    margin-bottom: -1px;
}
.panel-dock .tool {
    width: 42px;
}
.panel-dock .tool svg {
    width: 28px;
    height: 28px;
}
.separator-row {
    flex: none;
    height: 7px;
    background: linear-gradient(to right, #777 1px, transparent 1px) left center / 3px 1px repeat-x;
}
.tiny {
    fill: #333;
    font: 3px "Liberation Sans", sans-serif;
}
.tiny-line {
    font-size: 4px;
}

/* Status bar */
.statusbar {
    display: grid;
    flex: none;
    grid-template-columns: 253fr 253fr 434fr 329fr 231fr;
    height: 46px;
    background-color: #dadada;
    font-size: 10px;
}
.coords {
    display: flex;
    flex-direction: column;
    justify-content: space-between;
    margin: 4px 0 2px;
    padding: 5px 2px 3px;
    font-size: 9px;
    font-weight: 500;
    line-height: 12px;
}
.divided {
    border-left: 1px solid #888;
}
.status-cell {
    display: flex;
    align-items: center;
    gap: 3px;
    padding-top: 2px;
}
.dot {
    width: 6px;
    height: 6px;
    border-radius: 50%;
    background-color: #c2c2c2;
}
.hint {
    margin: 0 12px 0 77px;
}
.mouse {
    width: 20px;
    height: 32px;
}
```
